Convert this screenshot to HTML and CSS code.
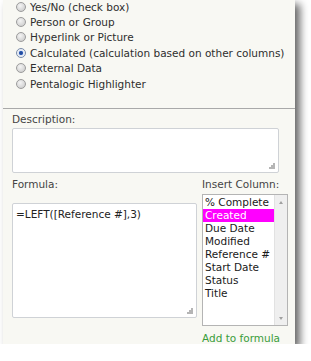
FILE: index.html
```html
<!DOCTYPE html>
<html>
<head>
<meta charset="utf-8">
<link rel="stylesheet" href="styles.css">
</head>
<body>
<div class="panel">
  <div class="choices">
    <div class="choice"><span class="radio"></span><span>Yes/No (check box)</span></div>
    <div class="choice"><span class="radio"></span><span>Person or Group</span></div>
    <div class="choice"><span class="radio"></span><span>Hyperlink or Picture</span></div>
    <div class="choice"><span class="radio checked"></span><span>Calculated (calculation based on other columns)</span></div>
    <div class="choice"><span class="radio"></span><span>External Data</span></div>
    <div class="choice"><span class="radio"></span><span>Pentalogic Highlighter</span></div>
  </div>
  <div class="section">
    <div class="label">Description:</div>
    <div class="textbox desc"><span class="grip"></span></div>
    <div class="formula-row">
      <div class="formula-col">
        <div class="label">Formula:</div>
        <div class="textbox formula"><span class="ftext">=LEFT([Reference #],3)</span><span class="grip"></span></div>
      </div>
      <div class="insert-col">
        <div class="label">Insert Column:</div>
        <div class="listbox">
          <div class="items">
            <div class="item">% Complete</div>
            <div class="item selected">Created</div>
            <div class="item">Due Date</div>
            <div class="item">Modified</div>
            <div class="item">Reference #</div>
            <div class="item">Start Date</div>
            <div class="item">Status</div>
            <div class="item">Title</div>
          </div>
          <div class="scrollbar"><span class="arrow up"></span><span class="arrow down"></span></div>
        </div>
        <div class="add">Add to formula</div>
      </div>
    </div>
  </div>
</div>
</body>
</html>
```
FILE: styles.css
```css
html, body {
  margin: 0;
  padding: 0;
  background: #ffffff;
}
body {
  font-family: "DejaVu Sans", Verdana, sans-serif;
  font-size: 10.5px;
  color: #2e2e2e;
}
.panel {
  width: 292px;
  height: 345px;
  margin-left: 3px;
  margin-top: -1px;
  background: #f8f8f3;
  box-shadow: 5px 5px 8px rgba(0, 0, 0, 0.6);
  box-sizing: border-box;
}
.choices {
  padding: 0 0 0 13px;
  height: 110px;
  box-sizing: border-box;
  border-bottom: 1px solid #a9a9a9;
}
.choice {
  display: flex;
  align-items: center;
  height: 15.4px;
  white-space: nowrap;
}
.radio {
  width: 10px;
  height: 10px;
  border-radius: 50%;
  box-sizing: border-box;
  border: 1px solid #9c9c9c;
  background: radial-gradient(circle at 40% 35%, #f4f4f4 0%, #d8d8d8 60%, #c2c2c2 100%);
  margin-right: 4px;
  margin-left: 0;
  flex: none;
}
.radio.checked {
  border-color: #7a8ca8;
  background: radial-gradient(circle at 50% 50%, #1c3f86 0%, #2f5db8 30%, #dfe6f2 45%, #ffffff 100%);
}
.section {
  padding: 3px 0 0 9px;
}
.label {
  line-height: 14px;
  height: 14px;
  color: #444;
  white-space: nowrap;
}
.textbox {
  position: relative;
  background: #ffffff;
  border: 1px solid #cfd2d6;
  border-radius: 2px;
  box-sizing: border-box;
}
.desc {
  margin-top: 2px;
  width: 267px;
  height: 45px;
}
.grip {
  position: absolute;
  right: 3px;
  bottom: 3px;
  width: 6px;
  height: 6px;
  background:
    radial-gradient(circle, #b5b5b5 0.8px, transparent 1px) 4px 0 / 2px 2px no-repeat,
    radial-gradient(circle, #b5b5b5 0.8px, transparent 1px) 2px 2px / 2px 2px no-repeat,
    radial-gradient(circle, #b5b5b5 0.8px, transparent 1px) 4px 2px / 2px 2px no-repeat,
    radial-gradient(circle, #b5b5b5 0.8px, transparent 1px) 0 4px / 2px 2px no-repeat,
    radial-gradient(circle, #b5b5b5 0.8px, transparent 1px) 2px 4px / 2px 2px no-repeat,
    radial-gradient(circle, #b5b5b5 0.8px, transparent 1px) 4px 4px / 2px 2px no-repeat;
}
.formula-row {
  display: flex;
  margin-top: 4px;
}
.formula-col {
  width: 185px;
}
.formula {
  margin-top: 12px;
  width: 185px;
  height: 115px;
  padding: 3px 3px;
  line-height: 14px;
  color: #222;
}
.ftext {
  white-space: nowrap;
}
.insert-col {
  margin-left: 5px;
  width: 88px;
}
.listbox {
  margin-top: 3px;
  width: 86px;
  height: 132px;
  border: 1px solid #b4b4b4;
  background: #ffffff;
  box-sizing: border-box;
  display: flex;
}
.items {
  flex: 1;
  padding-top: 1px;
}
.item {
  height: 13px;
  line-height: 13px;
  padding-left: 2px;
  color: #1a1a1a;
  white-space: nowrap;
}
.item.selected {
  background: #ff00ff;
  color: #ffffff;
}
.scrollbar {
  width: 13px;
  background: #efefef;
  border-left: 1px solid #e2e2e2;
  display: flex;
  flex-direction: column;
  justify-content: space-between;
  align-items: center;
  padding: 6px 0 5px;
  box-sizing: border-box;
}
.arrow {
  width: 0;
  height: 0;
  border-left: 2.5px solid transparent;
  border-right: 2.5px solid transparent;
}
.arrow.up {
  border-bottom: 3px solid #a0a0a0;
}
.arrow.down {
  border-top: 3px solid #a0a0a0;
}
.add {
  margin-top: 5px;
  line-height: 14px;
  color: #3a9d3a;
  white-space: nowrap;
}
```
